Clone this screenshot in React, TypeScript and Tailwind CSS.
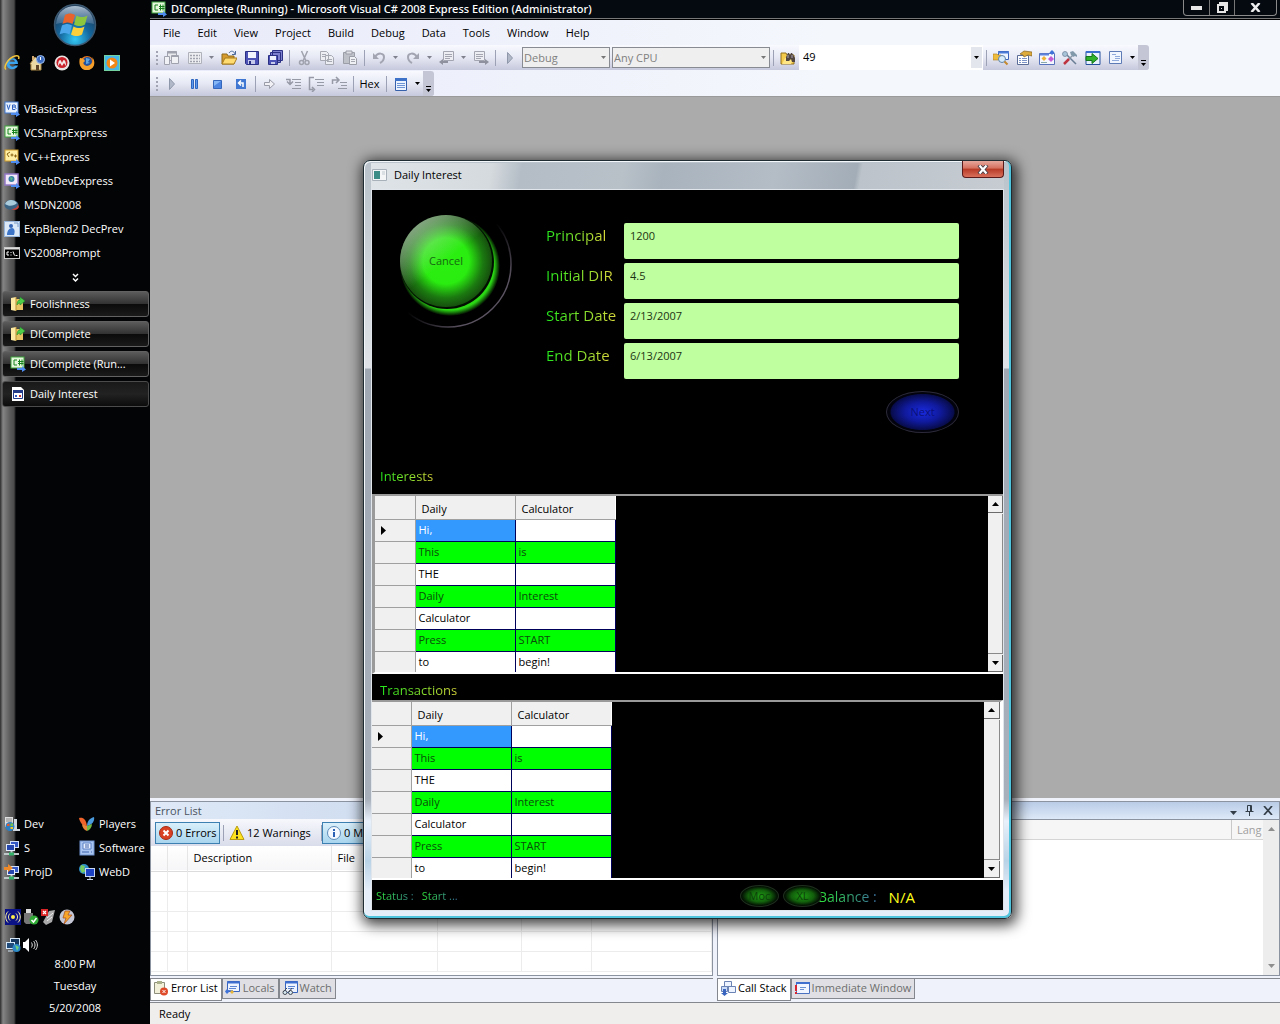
import React from "react";

type Kids = { children?: React.ReactNode };

function Svg({ children, size = 16 }: Kids & { size?: number }) {
  return (
    <svg width={size} height={size} viewBox="0 0 16 16" className="shrink-0" aria-hidden="true">
      {children}
    </svg>
  );
}

/* ---------- Icons ---------- */

const shortcutArrow = <path d="M7 12h5v-2l4 3.500-4 2.500v-2H7z" fill="#4f8cf0" />;

const icons = {
  ie: (
    <Svg>
      <path d="M14 9H5.500c.5 3 4 3.500 5.500 1.500h3C12 16 3 15.500 2.500 9 2 2 14 1 14 9zM5.600 6.800h5.200c-.5-3-4.500-3-5.200 0z" fill="#3ba4ec" />
      <path d="M2 14.500C-1 12 4 3 11 1c3.500-.8 4.500.5 3.500 3" fill="none" stroke="#f3c63c" strokeWidth="1.500" />
    </Svg>
  ),
  house: (
    <Svg>
      <path d="M1 9l5-7 6 6v7H2V9z" fill="#ead9a4" stroke="#a98846" />
      <path d="M3 1h2v4H3z" fill="#d2a970" />
      <path d="M7 10h3v5H7z" fill="#5b4428" />
      <circle cx="11.500" cy="4.500" r="4" fill="#3d6cc0" stroke="#9dbbe8" />
      <path d="M11 2h1v3h-1z" fill="#fff" />
    </Svg>
  ),
  red: (
    <Svg>
      <circle cx="8" cy="8" r="7.500" fill="#e9e4e4" />
      <circle cx="8" cy="7.500" r="5.500" fill="#c9202a" />
      <path d="M4 11c0-4 1-6 2-6s1.500 2 2 3c.5-1 1-3 2-3s2 2 2 6l-2-3-2 3-2-3z" fill="#f4e8e8" />
    </Svg>
  ),
  fox: (
    <Svg>
      <circle cx="8" cy="8" r="7" fill="#e8761b" />
      <circle cx="8.500" cy="6.500" r="4.500" fill="#24529c" />
      <path d="M7 3l4 1-2 3 2 1-4 1z" fill="#5da5de" />
      <path d="M1 3c2 0 4 1 5 3L4 8c1 4 6 4 9 0 2-3 0-6 0-6 4 4 3 12-4 13S-1 9 1 3z" fill="#f5a02b" />
    </Svg>
  ),
  wmp: (
    <Svg>
      <rect x=".5" y=".5" width="15" height="15" fill="#43b7e8" stroke="#74d2a0" />
      <circle cx="8" cy="8" r="5.500" fill="#f18718" />
      <path d="M6 4.500l5 3.500-5 3.500z" fill="#fff" />
    </Svg>
  ),
  vb: (
    <Svg>
      <rect x="1" y="1" width="13" height="11" fill="#e9f3ff" stroke="#3f79d0" />
      <path d="M3 3.500l1.500 5L6 3.500M8.500 4v4.500H11l1-1-1-1.500.5-1-.5-1H8.500M8 6h3" fill="none" stroke="#2a5fc0" />
      {shortcutArrow}
    </Svg>
  ),
  cs: (
    <Svg>
      <rect x="1" y="1" width="13" height="11" fill="#e5f8dc" stroke="#3fa33f" />
      <path d="M7 4H4v5h3M9.500 3.500v6M12 3.500v6M8 5.500h5.500M8 7.500h5.500" fill="none" stroke="#17831f" />
      {shortcutArrow}
    </Svg>
  ),
  vc: (
    <Svg>
      <rect x="1" y="1" width="13" height="11" fill="#fff0a6" stroke="#cf9d2a" />
      <path d="M6 3L3 5l2 3M6.500 6h3M8 4.500v3M10 7h3M11.500 5.500v3" fill="none" stroke="#8a6414" />
      {shortcutArrow}
    </Svg>
  ),
  web: (
    <Svg>
      <rect x="1" y="1" width="13" height="11" fill="#f2eafa" stroke="#9378c6" strokeWidth="1.500" />
      <circle cx="7.500" cy="6" r="3" fill="#377fa6" />
      <path d="M6 4l3 1-2 3z" fill="#5eb784" />
      {shortcutArrow}
    </Svg>
  ),
  msdn: (
    <Svg>
      <ellipse cx="7.500" cy="8" rx="7" ry="5" fill="#3b6384" />
      <path d="M1 7c2-5 9-5 12-1-3 3-8 4-12 1z" fill="#a9cbdc" />
      <path d="M7 12c4 0 7-2 7-5l1 3c-1 3-5 4-8 2z" fill="#c3413a" />
    </Svg>
  ),
  blend: (
    <Svg>
      <rect x=".5" y=".5" width="15" height="15" fill="#dbe8f8" stroke="#98b4d8" />
      <circle cx="7" cy="5" r="2" fill="#3565b5" />
      <path d="M3 14c0-4 2-7 5-7s3 4 2 7z" fill="#3c74c8" />
      <path d="M10 2h4v4" fill="none" stroke="#7799c9" />
    </Svg>
  ),
  prompt: (
    <Svg>
      <rect x=".5" y="2.500" width="15" height="11" fill="#000" stroke="#c8c8c8" />
      <path d="M1 3h14v1.500H1z" fill="#ddd" />
      <path d="M5 7H3v3h2M7 7v1M7 9.500v1M9 6.500l1.500 4M11.500 10.500h2" fill="none" stroke="#fff" />
    </Svg>
  ),
  folder: (
    <Svg>
      <path d="M1 2l5-1v14l-5-1z" fill="#fbe9a4" />
      <path d="M6 3h7v11H6z" fill="#e6c464" />
      <path d="M6 1v14" stroke="#b98f30" />
      <path d="M7 9c0-3 1-5 3-5V1l5 4-5 4V7C8 7 8 8 7 9z" fill="#4fd04a" stroke="#1c8a2a" strokeWidth=".6" />
    </Svg>
  ),
  form: (
    <Svg>
      <path d="M2 1h9l3 3v11H2z" fill="#fff" />
      <path d="M3.500 5.500h9v7h-9z" fill="#fff" stroke="#223a88" />
      <path d="M3 4h10v3H3z" fill="#223a88" />
      <path d="M5 9h2v2H5z" fill="#2e59c8" />
      <path d="M9 9h2v2H9z" fill="#c53535" />
    </Svg>
  ),
  dev: (
    <Svg>
      <path d="M1 1h8v10H1z" fill="#dedede" />
      <path d="M2 3h6M2 5h6" stroke="#888" />
      <path d="M10 3h3v10h-3zM9 13h7v2H9z" fill="#cfd6dd" />
      <circle cx="6" cy="10.500" r="4.500" fill="#2d7fc4" />
      <path d="M3 8l2.500-.5V10H3z" fill="#e85b28" />
      <path d="M6.500 7.500H9V10H6.500z" fill="#7cc243" />
      <path d="M6.500 11H9v2H6.500z" fill="#f6c52b" />
    </Svg>
  ),
  net: (
    <Svg>
      <rect x="6.500" y="1.500" width="8" height="6" fill="#3559c4" stroke="#d3e0f5" />
      <rect x="2.500" y="4.500" width="8" height="6" fill="#2547ae" stroke="#e1ebfa" />
      <path d="M0 14h15M7.500 11v3" stroke="#bfc8c8" strokeWidth="2" />
      <path d="M5 14h5" stroke="#32b268" strokeWidth="3" />
    </Svg>
  ),
  proj: (
    <Svg>
      <rect x="6.500" y="2.500" width="8" height="6" fill="#3559c4" stroke="#d3e0f5" />
      <rect x="3.500" y="5.500" width="7" height="5" fill="#2547ae" stroke="#e1ebfa" />
      <path d="M0 3h4V0l5 4-5 4V6H0z" fill="#ef8a2a" />
      <path d="M0 14h15M7.500 11v3" stroke="#bfc8c8" strokeWidth="2" />
      <path d="M5 14h5" stroke="#32b268" strokeWidth="3" />
    </Svg>
  ),
  players: (
    <Svg>
      <path d="M0 2c4-1 7 1 8 8-4 0-7-3-8-8z" fill="#f0632a" />
      <path d="M8 10c0-5 3-8 7-9 1 4-2 8-7 9z" fill="#4a9ade" />
      <path d="M3 8l5 2v5c-3-1-5-4-5-7z" fill="#e9853a" />
      <path d="M8 10l5-2c0 3-2 6-5 7z" fill="#72b844" />
    </Svg>
  ),
  software: (
    <Svg>
      <rect x="1" y="1" width="14" height="14" fill="#a9c5f0" stroke="#7192cf" />
      <path d="M4 3h8v6H4z" fill="#e7f0ff" stroke="#5a7fc5" />
      <path d="M3 12h7M6 5h4M6 7h4M12 12h1" stroke="#3f62ab" />
    </Svg>
  ),
  webd: (
    <Svg>
      <circle cx="5" cy="5" r="5" fill="#2f8fc6" />
      <path d="M2 1l4 1-1 3 2 2-4 2-2-4z" fill="#76cc63" />
      <rect x="6.500" y="4.500" width="9" height="8" fill="#1d43c4" stroke="#c8d7f0" />
      <path d="M11 13v2M8 15.500h6" stroke="#c8d7f0" />
    </Svg>
  ),
  radio: (
    <Svg>
      <path d="M0 0h16v16H0z" fill="#0b1285" />
      <circle cx="8" cy="8" r="2" fill="#ffef4a" />
      <path d="M5 4.500c-2 2-2 5 0 7M11 4.500c2 2 2 5 0 7M3 2.500c-3 3-3 8 0 11M13 2.500c3 3 3 8 0 11" fill="none" stroke="#fff6a0" />
    </Svg>
  ),
  usb: (
    <Svg>
      <path d="M3 0h5v4H3z" fill="#ddd" />
      <path d="M1 4h9v8l-3 3H3l-2-2z" fill="#777" />
      <circle cx="11" cy="11" r="4.500" fill="#30ab35" />
      <path d="M8.500 11l2 2 3-4" fill="none" stroke="#fff" strokeWidth="1.500" />
    </Svg>
  ),
  card: (
    <Svg>
      <path d="M8 2l6-1-3 12-6 3-3-3z" fill="#aaa" />
      <path d="M6 9l6-5M6 12l5-4" stroke="#eee" />
      <rect width="7" height="7" fill="#d92525" />
      <path d="M2 2l3 3M5 2L2 5" stroke="#fff" strokeWidth="1.200" />
    </Svg>
  ),
  bolt: (
    <Svg>
      <circle cx="8" cy="8" r="7.500" fill="#c5c7d4" />
      <path d="M6 2h5l-2 4h4L5 15l2-6H4z" fill="#f6a52a" stroke="#a54a1a" strokeWidth=".7" />
    </Svg>
  ),
  lan: (
    <Svg>
      <rect x="5.500" y="1.500" width="9" height="8" fill="#16375e" stroke="#d6e8f7" />
      <rect x="1.500" y="5.500" width="8" height="6" fill="#1f4a7a" stroke="#d6e8f7" />
      <path d="M3 14h5" stroke="#d6e8f7" />
      <circle cx="11.500" cy="11" r="4" fill="#2c87c8" />
      <path d="M10 8l4 2-2 4-1-3z" fill="#6fd07b" />
    </Svg>
  ),
  speaker: (
    <Svg>
      <path d="M0 5h2l4-4v14l-4-4H0z" fill="#fff" />
      <path d="M8.500 5.500c1 2 1 3 0 5M10.500 4c2 2 2 6 0 8M12.500 3c2.500 3 2.500 7 0 10" fill="none" stroke="#ddd" />
    </Svg>
  ),
  newProject: (
    <Svg>
      <path d="M3.500 1.500h9v9h-9z" fill="#e8e9ed" stroke="#a0a3ad" />
      <path d="M3 2.500h10" stroke="#a0a3ad" strokeWidth="2" />
      <path d="M.5 6.500h5v8h-5zM7.500 5.500h7v8h-7z" fill="#f0f1f5" stroke="#a0a3ad" />
      <path d="M8 6.500h6" stroke="#a0a3ad" />
    </Svg>
  ),
  addItem: (
    <Svg>
      <path d="M1.500 2.500h13v11h-13z" fill="#eceef2" stroke="#b0b2bb" />
      <path d="M3 5.500h10M3 8.500h10M3 11.500h10" stroke="#a0a3ad" strokeWidth="1.500" strokeDasharray="2 1" />
    </Svg>
  ),
  open: (
    <Svg>
      <path d="M1 4h5l1 2h6v8H1z" fill="#d79b2d" stroke="#8d6b1b" />
      <path d="M1 14l3-6h12l-3 6z" fill="#ffdb70" stroke="#a77b1c" />
      <path d="M8 3c2-3 5-2 6 1M14.500 1v3.500H11" fill="none" stroke="#4b6a9b" />
    </Svg>
  ),
  save: (
    <Svg>
      <path d="M1.500 1.500h13v13h-12l-1-1z" fill="#4d52b6" stroke="#2c3085" />
      <path d="M4 2h8v6H4z" fill="#f2f5ff" />
      <path d="M4 10h7v4H4z" fill="#c7cbeb" />
      <path d="M5 11h2v3H5z" fill="#2c3085" />
    </Svg>
  ),
  saveAll: (
    <Svg>
      <path d="M5.500.5h10v10h-10zM3.500 2.500h10v10h-10z" fill="#7c80cf" stroke="#2c3085" />
      <path d="M1.500 5.500h9v9h-9z" fill="#4d52b6" stroke="#2c3085" />
      <path d="M3 6h6v4H3z" fill="#eef1ff" />
      <path d="M4 12h4v2H4z" fill="#c7cbeb" />
    </Svg>
  ),
  cut: (
    <Svg>
      <path d="M5.500 1L10 11M11.500 1L7 11" stroke="#a0a3ad" strokeWidth="1.500" />
      <circle cx="5.500" cy="12.500" r="2" fill="none" stroke="#a0a3ad" strokeWidth="1.500" />
      <circle cx="11" cy="12.500" r="2" fill="none" stroke="#a0a3ad" strokeWidth="1.500" />
    </Svg>
  ),
  copy: (
    <Svg>
      <path d="M1.500 1.500h6l2 2v7h-8zM6.500 5.500h6l2 2v7h-8z" fill="#eceef3" stroke="#a6a8b2" />
      <path d="M3 4.500h4M3 6.500h3M8 9.500h5M8 11.500h5" stroke="#a6a8b2" />
    </Svg>
  ),
  paste: (
    <Svg>
      <path d="M1.500 2.500h11v11h-11z" fill="#bfc1c9" stroke="#9b9da7" />
      <path d="M4 1h6v3H4z" fill="#dfe0e5" stroke="#9b9da7" />
      <path d="M7.500 6.500h5l2 2v6h-7z" fill="#f0f1f5" stroke="#9b9da7" />
      <path d="M9 9.500h4M9 11.500h4" stroke="#a6a8b2" />
    </Svg>
  ),
  undo: (
    <Svg>
      <path d="M4 7c3-5 9-4 9 0 0 3-2 5-4 6" fill="none" stroke="#a3a6b2" strokeWidth="2" />
      <path d="M2 3v6h6z" fill="#a3a6b2" />
    </Svg>
  ),
  redo: (
    <Svg>
      <path d="M12 7c-3-5-9-4-9 0 0 3 2 5 4 6" fill="none" stroke="#a3a6b2" strokeWidth="2" />
      <path d="M14 3v6H8z" fill="#a3a6b2" />
    </Svg>
  ),
  navBack: (
    <Svg>
      <path d="M4.500 1.500h10v9h-10z" fill="#eceef3" stroke="#a3a6b0" />
      <path d="M6 4.500h7M6 6.500h7M6 8.500h5" stroke="#a3a6b0" />
      <path d="M0 12l4-3v2h5v2H4v2z" fill="#8f929e" />
    </Svg>
  ),
  navForward: (
    <Svg>
      <path d="M1.500 1.500h10v9h-10z" fill="#eceef3" stroke="#a3a6b0" />
      <path d="M3 4.500h7M3 6.500h7M3 8.500h5" stroke="#a3a6b0" />
      <path d="M16 12l-4-3v2H6v2h6v2z" fill="#8f929e" />
    </Svg>
  ),
  play: (
    <Svg>
      <path d="M5.500 2.500l5 5.500-5 5.500z" fill="#b1b9c8" stroke="#8f98ab" />
    </Svg>
  ),
  findInFiles: (
    <Svg>
      <path d="M1 3h5l1 2h7v9H1z" fill="#f3ca4c" stroke="#92701f" />
      <path d="M2 14l3-6h9l-3 6z" fill="#ffe583" />
      <path d="M6 7l2-4h1l1 2 1-2h1l3 5v4h-3l-1-3-2 2H6z" fill="#51463f" />
      <path d="M8 5v3M12 5v3" stroke="#aba3b8" />
    </Svg>
  ),
  solution: (
    <Svg>
      <path d="M5.500 1.500h10v8h-10z" fill="#eff5ff" stroke="#3962b8" />
      <path d="M5 2.500h11" stroke="#4b7bd7" strokeWidth="2" />
      <path d="M0 4h4l1 1h3v5H0z" fill="#efbd3e" stroke="#a77b1c" strokeWidth=".6" />
      <circle cx="9" cy="9" r="3.500" fill="#d6ecfa" stroke="#6083a8" />
      <path d="M11.500 11.500l3 3" stroke="#c58a2d" strokeWidth="2" />
    </Svg>
  ),
  properties: (
    <Svg>
      <path d="M1.500 5.500h11v9h-11z" fill="#fff" stroke="#5b6d96" />
      <path d="M3 8.500h2M6 8.500h5M3 10.500h2M6 10.500h5M3 12.500h2M6 12.500h5" stroke="#7b93c6" />
      <path d="M4 4l4-3 8 1v4l-4-1-4 2-1-2z" fill="#dcab3b" stroke="#846223" strokeWidth=".7" />
    </Svg>
  ),
  toolbox: (
    <Svg>
      <path d="M.5 3.500h15v11H.5z" fill="#f4f7ff" stroke="#5672bd" />
      <path d="M1 4.500h9" stroke="#5d83da" strokeWidth="2" />
      <path d="M5 6l2.500 2.500L5 11 2.500 8.500z" fill="#f0b339" />
      <path d="M12 6l3 3-3 3-3-3z" fill="#c55cd6" />
      <path d="M13 0l2.500 2.500L13 5l-2.500-2.500z" fill="#3f72d8" />
      <path d="M2 12.500h6" stroke="#8aa" />
    </Svg>
  ),
  tools: (
    <Svg>
      <path d="M3 3l11 11" stroke="#697e94" strokeWidth="1.500" />
      <circle cx="3" cy="4" r="2.500" fill="#a8c4d8" stroke="#697e94" strokeWidth=".7" />
      <path d="M10 6L6 10" stroke="#8a97a4" strokeWidth="1.500" />
      <path d="M7 9l-5 5" stroke="#bd3340" strokeWidth="2.500" />
      <path d="M8 2l3-1 4 4v2l-2-1-2 1-2-2z" fill="#8299ac" />
    </Svg>
  ),
  startPage: (
    <Svg>
      <path d="M1 1.500h14v13H1z" fill="#e8f2ff" stroke="#254f9b" />
      <path d="M1 2h14" stroke="#3a6dce" strokeWidth="2" />
      <path d="M1 6.500h6V3.500l6 5-6 5v-3H1z" fill="#2fb12b" stroke="#14741b" />
    </Svg>
  ),
  listWindow: (
    <Svg>
      <path d="M1.500 1.500h12v12h-12z" fill="#f2f6ff" stroke="#5f7bb5" />
      <path d="M4 4.500h4M7 6.500h5M7 8.500h5M4 10.500h7" stroke="#8faadb" />
    </Svg>
  ),
  pause: (
    <Svg>
      <path d="M4.500 3.500h2v9h-2zM8.500 3.500h2v9h-2z" fill="#5c98ec" stroke="#2d64be" />
    </Svg>
  ),
  stop: (
    <Svg>
      <path d="M3.500 4.500h8v8h-8z" fill="#4c85e1" stroke="#3467bb" />
      <path d="M4 5h7l-7 5z" fill="#84b6f6" />
    </Svg>
  ),
  restart: (
    <Svg>
      <path d="M3 3h10v10H3z" fill="#3f77d2" />
      <path d="M10 11V7H6M8 4.500L5.500 7 8 9.500" fill="none" stroke="#fff" strokeWidth="1.500" />
    </Svg>
  ),
  nextStatement: (
    <Svg>
      <path d="M2.500 6.500h5v-3l5 4.500-5 4.500v-3h-5z" fill="#f1f1f5" stroke="#999ca7" />
    </Svg>
  ),
  stepInto: (
    <Svg>
      <path d="M7 3.500h9M10 6.500h6M10 9.500h6M7 12.500h9" stroke="#9699a6" />
      <path d="M1 3.500h4v4M2 5.500l3 3 3-3" fill="none" stroke="#9699a6" strokeWidth="1.500" />
    </Svg>
  ),
  stepOver: (
    <Svg>
      <path d="M7 3.500h9M9 6.500h7M9 9.500h7" stroke="#9699a6" />
      <path d="M6 1.500H1.500v12H5M4 11l2.500 2.500L4 16" fill="none" stroke="#9699a6" strokeWidth="1.500" />
    </Svg>
  ),
  stepOut: (
    <Svg>
      <path d="M9 6.500h7M10 9.500h6M7 12.500h9" stroke="#9699a6" />
      <path d="M1.500 8V4H7M5 1l3 3-3 3" fill="none" stroke="#9699a6" strokeWidth="1.500" />
    </Svg>
  ),
  output: (
    <Svg>
      <path d="M2.500 2.500h11v12h-11z" fill="#eaf3ff" stroke="#3661aa" />
      <path d="M2 3.500h12" stroke="#3e72c9" strokeWidth="3" />
      <path d="M4 7.500h8M4 9.500h8M4 11.500h8" stroke="#6c94d4" />
    </Svg>
  ),
  error: (
    <Svg>
      <circle cx="8" cy="8" r="6.500" fill="#d84124" stroke="#a72a14" />
      <path d="M5.500 5.500l5 5M10.500 5.500l-5 5" stroke="#fff" strokeWidth="2" />
    </Svg>
  ),
  warning: (
    <Svg>
      <path d="M8 1l7 13.500H1z" fill="#ffe31c" stroke="#b89b10" strokeLinejoin="round" />
      <path d="M8 5v5M8 11.500v2" stroke="#222" strokeWidth="2" />
    </Svg>
  ),
  info: (
    <Svg>
      <circle cx="8" cy="8" r="6.500" fill="#f3f9ff" stroke="#5d8bb8" />
      <path d="M8 4v2M8 7v5" stroke="#2b61b4" strokeWidth="2" />
    </Svg>
  ),
  errorTab: (
    <Svg>
      <path d="M1.500 2.500h10v11h-10z" fill="#f3f0da" stroke="#8d8d7c" />
      <path d="M4 1h5v3H4z" fill="#aab08a" />
      <circle cx="11" cy="11.500" r="4" fill="#df4b2a" />
      <path d="M9.500 10l3 3M12.500 10l-3 3" stroke="#fff" />
    </Svg>
  ),
  locals: (
    <Svg>
      <path d="M2.500 1.500h12v10h-12z" fill="#eef4ff" stroke="#3863bc" />
      <path d="M2 2.500h13" stroke="#3c6fd0" strokeWidth="2" />
      <path d="M5 6.500h7M4 8.500h7M3 10.500h5" stroke="#5c86d4" />
      <path d="M7 10l2 2-2 2-2-2z" fill="#e8b637" />
      <path d="M2 9l2.500 2.500L2 14l-2-2.500z" fill="#3f72d8" />
    </Svg>
  ),
  watch: (
    <Svg>
      <path d="M3.500 1.500h12v11h-12z" fill="#eef4ff" stroke="#3863bc" />
      <path d="M3 2.500h13" stroke="#3c6fd0" strokeWidth="2" />
      <path d="M6 6.500h7M6 8.500h6" stroke="#5c86d4" />
      <circle cx="3" cy="12.500" r="2" fill="#d8e8f0" stroke="#454b57" />
      <circle cx="8.500" cy="12.500" r="2" fill="#d8e8f0" stroke="#454b57" />
      <path d="M1 12l4-4M7 12l3-4" stroke="#454b57" />
    </Svg>
  ),
  callStack: (
    <Svg>
      <path d="M4.500 1.500h7v5h-7zM8.500 6.500h7v6h-7z" fill="#eef4ff" stroke="#6b82b4" />
      <path d="M1.500 6.500h6v5h-6z" fill="#cbdcf8" stroke="#6b82b4" />
      <path d="M3 9v4H1l3.500 3L8 13H6V9z" fill="#3a66c0" />
    </Svg>
  ),
  immediate: (
    <Svg>
      <path d="M2.500 2.500h13v11h-13z" fill="#f0f5ff" stroke="#4a71bf" />
      <path d="M2 3h14" stroke="#3f6fce" strokeWidth="2" />
      <path d="M6 7.500h6M6 9.500h4" stroke="#6c94d4" />
      <path d="M1 5h2v6H1zM1 12h2v2H1z" fill="#d72630" />
    </Svg>
  ),
  app: (
    <Svg>
      <path d="M.5 2.500h14v11H.5z" fill="#f3f5f6" stroke="#a8b1b9" />
      <path d="M2 4h6v8H2z" fill="#3c8d88" />
      <path d="M10 4h3v4h-3z" fill="#d9dfe2" />
    </Svg>
  ),
};

type IconName = keyof typeof icons;

function Triangle({ up = false, className = "text-black" }: { up?: boolean; className?: string }) {
  return (
    <svg width="7" height="4" viewBox="0 0 7 4" className={className} aria-hidden="true">
      <path d={up ? "M0 4h7L3.500 0z" : "M0 0h7L3.500 4z"} fill="currentColor" />
    </svg>
  );
}

function StartOrb() {
  return (
    <svg width="44" height="44" viewBox="0 0 44 44" aria-hidden="true">
      <defs>
        <radialGradient id="orb" cx="50%" cy="85%" r="75%">
          <stop offset="0" stopColor="#35c8f4" />
          <stop offset=".5" stopColor="#14689f" />
          <stop offset="1" stopColor="#1d3a58" />
        </radialGradient>
        <linearGradient id="gloss" x1="0" y1="0" x2="0" y2="1">
          <stop offset="0" stopColor="#c6d8e8" stopOpacity=".85" />
          <stop offset="1" stopColor="#7795b5" stopOpacity=".4" />
        </linearGradient>
      </defs>
      <circle cx="22" cy="22" r="20.500" fill="url(#orb)" stroke="#3c5870" strokeWidth="1.500" />
      <path d="M3 21C4 8 13 3 22 3s18 5 19 18c-12-3-26-3-38 0z" fill="url(#gloss)" />
      <path d="M12 12c4-2 6-2 10 0l-2.500 9c-3-2-6-2-10 0z" fill="#e9632b" />
      <path d="M23.500 12.500c4 2 7 2 11 0l-2.500 9c-4 2-7 2-11 0z" fill="#8cc63e" />
      <path d="M9 22.500c4-2 7-2 10 0l-2.500 9c-3-2-6-2-10 0z" fill="#4ba7ea" />
      <path d="M20.500 23.500c4 2 7 2 11 0l-2.500 8c-4 2-7 2-11 0z" fill="#fbd03c" />
    </svg>
  );
}

/* ---------- Sidebar ---------- */

const launchers: [IconName, string][] = [
  ["vb", "VBasicExpress"],
  ["cs", "VCSharpExpress"],
  ["vc", "VC++Express"],
  ["web", "VWebDevExpress"],
  ["msdn", "MSDN2008"],
  ["blend", "ExpBlend2 DecPrev"],
  ["prompt", "VS2008Prompt"],
];
const tasks: [IconName, string][] = [
  ["folder", "Foolishness"],
  ["folder", "DIComplete"],
  ["cs", "DIComplete (Run..."],
  ["form", "Daily Interest"],
];
const shortcuts: [IconName, string][] = [
  ["dev", "Dev"],
  ["players", "Players"],
  ["net", "S"],
  ["software", "Software"],
  ["proj", "ProjD"],
  ["webd", "WebD"],
];

function Sidebar() {
  return (
    <aside className="flex w-[150px] shrink-0 flex-col bg-[linear-gradient(90deg,#2c2c2c_0,#858585_3px,#5b5b5b_10px,#4b4b4b_14px,#030406_16px)] text-white">
      <button aria-label="Start" className="mt-[3px] self-center">
        <StartOrb />
      </button>
      <nav className="mt-2 flex gap-[9px] pl-1" aria-label="Quick launch">
        {(["ie", "house", "red", "fox", "wmp"] as IconName[]).map((n) => (
          <button key={n} aria-label={n}>{icons[n]}</button>
        ))}
      </nav>
      <ul className="mt-[26px] pl-1">
        {launchers.map(([icon, label]) => (
          <li key={label}>
            <button className="flex h-6 items-center gap-1 whitespace-nowrap">
              {icons[icon]}
              {label}
            </button>
          </li>
        ))}
      </ul>
      <button aria-label="More" className="mt-2 self-center">
        <svg width="7" height="10" viewBox="0 0 7 10" fill="none" stroke="#fff" strokeWidth="1.500" aria-hidden="true">
          <path d="M1 1l2.500 2.500L6 1M1 5.500L3.500 8 6 5.500" />
        </svg>
      </button>
      <div className="mt-2 flex flex-col gap-1 pl-0.5 pr-px">
        {tasks.map(([icon, label], i) => (
          <button
            key={label}
            className={
              "flex h-[26px] items-center gap-1 whitespace-nowrap rounded-[3px] border px-[7px] " +
              (i === 3
                ? "border-[#4b4b4b] bg-[linear-gradient(#191919,#222_50%,#0c0c0c)]"
                : "border-[#626262] bg-[linear-gradient(#5b5b5b,#333_48%,#0b0b0b_52%,#1a1a1a)]")
            }
          >
            {icons[icon]}
            {label}
          </button>
        ))}
      </div>
      <div className="mt-auto grid grid-cols-[75px_1fr] pl-1">
        {shortcuts.map(([icon, label]) => (
          <button key={label} className="flex h-6 items-center gap-1 whitespace-nowrap">
            {icons[icon]}
            {label}
          </button>
        ))}
      </div>
      <div className="mt-[25px] flex gap-0.5 pl-[5px]">
        {icons.radio}
        {icons.usb}
        {icons.card}
        {icons.bolt}
      </div>
      <div className="mt-3 flex gap-0.5 pl-[5px]">
        {icons.lan}
        {icons.speaker}
      </div>
      <div className="mb-[5px] flex flex-col items-center leading-[22px]">
        <span>8:00 PM</span>
        <span>Tuesday</span>
        <span>5/20/2008</span>
      </div>
    </aside>
  );
}

/* ---------- IDE toolbars ---------- */

function Tool({ name }: { name: IconName }) {
  return (
    <button aria-label={name} className="flex w-[23px] shrink-0 items-center justify-center">
      {icons[name]}
    </button>
  );
}
function Caret({ dim = false }: { dim?: boolean }) {
  return (
    <button aria-label="Options" className="flex w-[11px] shrink-0 items-center justify-center">
      <svg width="5" height="3" viewBox="0 0 5 3" aria-hidden="true">
        <path d="M0 0h5L2.500 3z" fill={dim ? "#7f828c" : "#000"} />
      </svg>
    </button>
  );
}
function Sep() {
  return (
    <span className="flex w-[6px] shrink-0 items-center justify-center">
      <span className="h-4 w-px bg-[#9da1b5]" />
    </span>
  );
}
function Grip() {
  return (
    <span className="flex w-[6px] shrink-0 flex-col justify-center gap-0.5 pl-0.5">
      {[0, 1, 2, 3].map((i) => (
        <span key={i} className="size-0.5 bg-[#a2a4b3]" />
      ))}
    </span>
  );
}
function Overflow() {
  return (
    <button aria-label="Toolbar options" className="flex w-[11px] shrink-0 flex-col items-center justify-end gap-0.5 rounded-r-[3px] bg-[#c4c6d6] pb-1">
      <span className="h-px w-[5px] bg-black" />
      <svg width="5" height="3" viewBox="0 0 5 3" aria-hidden="true">
        <path d="M0 0h5L2.500 3z" />
      </svg>
    </button>
  );
}
function Combo({ label, value, className }: { label: string; value: string; className: string }) {
  return (
    <span className={"relative my-0.5 shrink-0 " + className}>
      <select aria-label={label} disabled className="block h-full w-full appearance-none border border-[#888b92] bg-[#efefef] px-px leading-4 text-[#808080] opacity-100">
        <option>{value}</option>
      </select>
      <svg width="5" height="3" viewBox="0 0 5 3" className="absolute right-1 top-[9px]" aria-hidden="true">
        <path d="M0 0h5L2.500 3z" fill="#777" />
      </svg>
    </span>
  );
}

const strip = "flex w-max rounded-r-[3px] bg-[linear-gradient(#f9faff,#e6e8f4_50%,#c6c9dc)] pl-1";

function Toolbars() {
  return (
    <div className="flex flex-col gap-px">
      <div className={strip + " h-[25px]"}>
        <Grip />
        <Tool name="newProject" />
        <Tool name="addItem" />
        <Caret dim />
        <Tool name="open" />
        <Tool name="save" />
        <Tool name="saveAll" />
        <Sep />
        <Tool name="cut" />
        <Tool name="copy" />
        <Tool name="paste" />
        <Sep />
        <Tool name="undo" />
        <Caret dim />
        <Tool name="redo" />
        <Caret dim />
        <Tool name="navBack" />
        <Caret dim />
        <Tool name="navForward" />
        <Sep />
        <Tool name="play" />
        <Combo label="Solution configuration" value="Debug" className="ml-px w-[88px]" />
        <Combo label="Solution platform" value="Any CPU" className="ml-0.5 w-[158px]" />
        <Sep />
        <Tool name="findInFiles" />
        <span className="flex w-[184px] bg-white">
          <input aria-label="Find" defaultValue="49" className="min-w-0 flex-1 bg-transparent px-1 pb-0.5 outline-none" />
          <span className="my-0.5 mr-px flex bg-[#e4e6ee]">
            <Caret />
          </span>
        </span>
        <Sep />
        <Tool name="solution" />
        <Tool name="properties" />
        <Tool name="toolbox" />
        <Tool name="tools" />
        <Tool name="startPage" />
        <Tool name="listWindow" />
        <Caret />
        <Overflow />
      </div>
      <div className={strip + " h-[25px]"}>
        <Grip />
        <Tool name="play" />
        <Tool name="pause" />
        <Tool name="stop" />
        <Tool name="restart" />
        <Sep />
        <Tool name="nextStatement" />
        <Tool name="stepInto" />
        <Tool name="stepOver" />
        <Tool name="stepOut" />
        <Sep />
        <button className="w-[27px] text-center">Hex</button>
        <Sep />
        <Tool name="output" />
        <Caret />
        <Overflow />
      </div>
    </div>
  );
}

const menus = ["File", "Edit", "View", "Project", "Build", "Debug", "Data", "Tools", "Window", "Help"];

function IdeHeader() {
  return (
    <header>
      <div className="flex h-[19px] justify-between border-b border-[#777] bg-[#050a11] pl-px text-white">
        <h1 className="flex items-center gap-1 font-['Noto_Sans','Open_Sans',sans-serif] font-medium">
          {icons.cs}
          DIComplete (Running) - Microsoft Visual C# 2008 Express Edition (Administrator)
        </h1>
        <div className="mr-[3px] flex h-4 divide-x divide-[#777] rounded-b-[4px] border border-t-0 border-[#8a8a8a]">
          <button aria-label="Minimize" className="flex w-[26px] items-center justify-center">
            <span className="h-[4px] w-[11px] bg-[#e6e6e6]" />
          </button>
          <button aria-label="Restore" className="flex w-[25px] items-start justify-center pt-0.5">
            <svg width="11" height="11" viewBox="0 0 11 11" aria-hidden="true">
              <path d="M2 0h9v9H9V2H2z" fill="#e6e6e6" />
              <path d="M1 3h7v7H1z" fill="none" stroke="#e6e6e6" strokeWidth="2" />
              <path d="M4 6h1v1H4z" fill="#e6e6e6" />
            </svg>
          </button>
          <button aria-label="Close" className="flex w-[41px] items-center justify-center">
            <svg width="11" height="9" viewBox="0 0 11 9" aria-hidden="true">
              <path d="M1.500 0L9.500 9M9.500 0L1.500 9" stroke="#eee" strokeWidth="2.500" />
            </svg>
          </button>
        </div>
      </div>
      <div className="border-b border-[#9a9a9a] border-t border-t-black bg-[linear-gradient(90deg,#e9eafa,#f4f7fc_60%)]">
        <nav className="flex h-[25px] items-center gap-[17px] pl-[13px]">
          {menus.map((m) => (
            <button key={m}>{m}</button>
          ))}
        </nav>
        <Toolbars />
      </div>
    </header>
  );
}

/* ---------- IDE bottom dock ---------- */

function Tab({ icon, label, active = false }: { icon: IconName; label: string; active?: boolean }) {
  return (
    <button
      className={
        "flex items-center gap-0.5 whitespace-nowrap border border-t-0 border-[#84878e] pl-0.5 pr-[3px] " +
        (active ? "h-[22px] bg-white pb-1" : "h-5 bg-[#e0e0e4] pb-0.5 text-[#6d6d6d]")
      }
    >
      {icons[icon]}
      {label}
    </button>
  );
}

function ErrorList() {
  return (
    <section className="flex w-[563px] shrink-0 flex-col">
      <div className="flex h-[175px] flex-col overflow-hidden border border-[#8b93a1] bg-white">
        <h2 className="h-[17px] shrink-0 bg-[linear-gradient(90deg,#dfe9f7,#b9cbe6)] pl-1 leading-[17px] text-[#4a5360]">Error List</h2>
        <div className="flex h-[27px] shrink-0 items-center bg-[linear-gradient(#f7f8fd,#d9dcea)] pl-1">
          <button className="flex h-[22px] w-[65px] items-center gap-0.5 whitespace-nowrap border border-[#3c7fb1] bg-[linear-gradient(#d9effa,#a8d5ee)] pl-0.5">
            {icons.error}0 Errors
          </button>
          <Sep />
          <button className="flex h-[22px] w-[92px] items-center gap-0.5 whitespace-nowrap pl-[3px]">
            {icons.warning}12 Warnings
          </button>
          <Sep />
          <button className="-ml-0.5 flex h-[22px] items-center gap-0.5 whitespace-nowrap border border-[#3c7fb1] bg-[linear-gradient(#d9effa,#a8d5ee)] px-[3px]">
            {icons.info}0 Messages
          </button>
        </div>
        <table className="w-full table-fixed border-collapse text-left">
          <colgroup>
            <col className="w-4" />
            <col className="w-5" />
            <col className="w-36" />
            <col className="w-[106px]" />
            <col className="w-[84px]" />
            <col className="w-[70px]" />
            <col />
          </colgroup>
          <thead>
            <tr className="h-[25px] border-b border-[#dcdcdc] bg-[linear-gradient(#fff,#f6f6f8)]">
              {["", "", "Description", "File", "", "", ""].map((h, i) => (
                <th key={i} className="border-r border-[#e6e6e6] pl-1.5 font-normal">{h}</th>
              ))}
            </tr>
          </thead>
          <tbody>
            {[0, 1, 2, 3, 4].map((r) => (
              <tr key={r} className="h-5 border-b border-[#ececec]">
                {[0, 1, 2, 3, 4, 5, 6].map((c) => (
                  <td key={c} className="border-r border-[#ececec]" />
                ))}
              </tr>
            ))}
          </tbody>
        </table>
      </div>
      <div className="mt-[2px] flex border-t border-[#84878e]">
        <Tab icon="errorTab" label="Error List" active />
        <Tab icon="locals" label="Locals" />
        <Tab icon="watch" label="Watch" />
      </div>
    </section>
  );
}

function CallStack() {
  return (
    <section className="flex min-w-0 flex-1 flex-col" aria-label="Call Stack">
      <div className="flex h-[175px] flex-col border border-[#8b93a1] bg-white">
        <div className="flex h-[18px] shrink-0 items-center justify-end gap-2 border-b border-[#8b93a1] bg-[linear-gradient(#b9cbe6,#dde9f8)] pr-1.5 text-[#333d48]">
          <button aria-label="Window position"><Triangle className="mt-1 text-[#333d48]" /></button>
          <button aria-label="Auto hide">
            <svg width="9" height="11" viewBox="0 0 9 11" fill="none" stroke="currentColor" aria-hidden="true">
              <path d="M2.500 6V.5h4V6M5.500 1v5M.5 6.500h8M4.500 7v4" />
            </svg>
          </button>
          <button aria-label="Close panel" className="ml-px">
            <svg width="10" height="9" viewBox="0 0 10 9" stroke="currentColor" strokeWidth="1.700" aria-hidden="true">
              <path d="M1 0l8 9M9 0L1 9" />
            </svg>
          </button>
        </div>
        <div className="flex flex-1">
          <div className="flex-1">
            <div className="flex h-5 justify-end border-b border-[#d5d5d5] bg-[#f7f6f6] text-[#a0a0a0]">
              <span className="w-8 border-l border-[#c9c9c9] pl-[5px] leading-5">Lang</span>
            </div>
          </div>
          <div className="flex w-4 flex-col items-center justify-between bg-[#ededed] py-[7px]">
            <Triangle up className="text-[#8e8e8e]" />
            <Triangle className="text-[#8e8e8e]" />
          </div>
        </div>
      </div>
      <div className="mt-[2px] flex border-t border-[#84878e]">
        <Tab icon="callStack" label="Call Stack" active />
        <Tab icon="immediate" label="Immediate Window" />
      </div>
    </section>
  );
}

/* ---------- Daily Interest dialog ---------- */

const rows = [
  ["Hi,", ""],
  ["This", "is"],
  ["THE", ""],
  ["Daily", "Interest"],
  ["Calculator", ""],
  ["Press", "START"],
  ["to", "begin!"],
];

function ScrollButton({ up = false }: { up?: boolean }) {
  return (
    <button
      aria-label={up ? "Scroll up" : "Scroll down"}
      className="flex h-[17px] shrink-0 items-center justify-center border-b border-r border-[#6b6b6b] bg-[#f0f0f0]"
    >
      <Triangle up={up} />
    </button>
  );
}

function DataGrid({ label, inset }: { label: string; inset?: boolean }) {
  return (
    <div
      className={
        "flex h-[180px] items-start justify-between overflow-hidden border-b-2 border-t-2 border-b-white border-t-[#9a9a9a] " +
        (inset ? "border-r-[3px] border-r-white" : "border-l-[3px] border-l-[#9a9a9a]")
      }
    >
      <table aria-label={label} className="table-fixed border-collapse bg-white text-left text-black">
        <colgroup>
          <col className={inset ? "w-[39px]" : "w-10"} />
          <col className="w-[100px]" />
          <col className="w-[100px]" />
        </colgroup>
        <thead>
          <tr className="h-[23px] bg-[#f0f0f0]">
            <th className="border-b border-r border-[#a0a0a0]" />
            <th className="border-b border-r border-[#a0a0a0] pl-1.5 pt-[3px] font-normal">Daily</th>
            <th className="border-b border-[#a0a0a0] pl-1.5 pt-[3px] font-normal">Calculator</th>
          </tr>
        </thead>
        <tbody>
          {rows.map(([a, b], i) => (
            <tr key={i} className={"h-[22px] " + (i % 2 ? "bg-[#00ff00] text-[#0b4a0b]" : "")}>
              <th className="border-b border-r border-[#a0a0a0] bg-[#f0f0f0] pl-1.5">
                {i === 0 && (
                  <svg width="5" height="9" viewBox="0 0 5 9" aria-label="Current row">
                    <path d="M0 0v9l5-4.500z" />
                  </svg>
                )}
              </th>
              <td className={"border-b border-r border-[#00005a] pl-[3px] " + (i === 0 ? "bg-[#3399ff] text-white" : "")}>{a}</td>
              <td className="border-b border-r border-[#00005a] pl-[3px]">{b}</td>
            </tr>
          ))}
        </tbody>
      </table>
      <div className={"flex h-full flex-col bg-[#f0f0f0] " + (inset ? "w-4" : "w-[15px]")}>
        <ScrollButton up />
        <div className="my-px flex-1 border-b border-r border-[#8a8a8a]" />
        <ScrollButton />
      </div>
    </div>
  );
}

const fields = [
  ["principal", "Principal", "1200"],
  ["dir", "Initial DIR", "4.5"],
  ["start", "Start Date", "2/13/2007"],
  ["end", "End Date", "6/13/2007"],
];

const greenYellow = "bg-[linear-gradient(90deg,#22e81c,#d6d63a)] bg-clip-text text-transparent";
const greenBlue = "bg-[linear-gradient(90deg,#2ee53a,#3a6f9e)] bg-clip-text text-transparent";

function CancelButton() {
  return (
    <button type="button" className="relative h-[118px] w-[114px]">
      <svg width="114" height="118" viewBox="0 0 114 118" aria-hidden="true">
        <defs>
          <radialGradient id="ball">
            <stop offset="0" stopColor="#2bf010" />
            <stop offset=".5" stopColor="#2aec10" />
            <stop offset=".8" stopColor="#1b7a10" />
            <stop offset="1" stopColor="#164f0e" />
          </radialGradient>
          <radialGradient id="halo">
            <stop offset=".88" stopColor="#2bd814" />
            <stop offset="1" stopColor="#2bd814" stopOpacity="0" />
          </radialGradient>
          <linearGradient id="shine" x1=".15" y1=".05" x2=".5" y2=".5">
            <stop offset="0" stopColor="#c8d8c8" stopOpacity=".7" />
            <stop offset="1" stopColor="#c8d8c8" stopOpacity="0" />
          </linearGradient>
          <linearGradient id="rim" x1=".3" y1=".3" x2=".8" y2=".8">
            <stop offset=".45" stopColor="#4a4250" stopOpacity="0" />
            <stop offset="1" stopColor="#5a5260" />
          </linearGradient>
        </defs>
        <circle cx="48" cy="50" r="63" fill="none" stroke="url(#rim)" strokeWidth="1.500" />
        <circle cx="50" cy="52" r="50" fill="url(#halo)" />
        <circle cx="47" cy="48" r="47" fill="#021002" />
        <circle cx="46" cy="47" r="46" fill="url(#ball)" />
        <circle cx="46" cy="47" r="46" fill="url(#shine)" />
      </svg>
      <span className="absolute left-0 top-[39px] w-[92px] text-center text-[#14690f]">Cancel</span>
    </button>
  );
}

function Dialog() {
  return (
    <section
      role="dialog"
      aria-label="Daily Interest"
      className="absolute left-[363px] top-[160px] w-[649px] rounded-[7px] border border-[#1f2d33] bg-[linear-gradient(#b9c2ca_0,#c9d0d6_90px,#dfe3e8_207px,#a0a9b3_208px,#a8b1bb_638px,#e8f1fb_660px,#b9d3e6_700px,#e6eefa_730px)] px-[7px] pb-[7px] shadow-[2px_3px_14px_3px_rgba(0,0,0,0.75),inset_-1px_-1px_0_1px_#4fc4dc,inset_1px_1px_0_#f4f8fa]"
    >
      <div className="flex h-7 justify-between bg-[linear-gradient(100deg,#dfe4e8_0,#d5dade_120px,#b4bdc6_150px,#b8c1c8_250px,#a9b3bd_290px,#b4bdc6_400px,#a3adb7_480px,#bcc3ca_485px,#c6ccd2)] bg-clip-content pt-0.5">
        <h2 className="flex items-center gap-1.5 pb-0.5 pl-px text-black">
          {icons.app}
          Daily Interest
        </h2>
        <button aria-label="Close" className="-mt-0.5 flex h-[17px] w-[42px] items-center justify-center rounded-b-[4px] border border-t-0 border-[#5b1a1a] bg-[linear-gradient(#e5a89c,#d5705f_45%,#b73a26_50%,#d8705c)]">
          <svg width="12" height="9" viewBox="0 0 12 9" aria-hidden="true">
            <path d="M2 0l8 9M10 0L2 9" stroke="#4b4048" strokeWidth="4" />
            <path d="M2.500 .5l7 8M9.500 .5l-7 8" stroke="#fff" strokeWidth="2.200" />
          </svg>
        </button>
      </div>
      <div className="border border-[#dfe5ea] bg-black">
        <form className="flex h-[276px] items-start pl-7 pr-11 pt-6">
          <CancelButton />
          <div className="ml-8 mt-[9px] flex flex-1 flex-col gap-1">
            {fields.map(([id, label, value]) => (
              <div key={id} className="flex">
                <label htmlFor={id} className="w-[78px] shrink-0 whitespace-nowrap text-[15px] leading-[24px]">
                  <span className={greenYellow}>{label}</span>
                </label>
                <input id={id} defaultValue={value} className="h-9 min-w-0 flex-1 rounded-[2px] bg-[#bfff9f] pb-[11px] pl-1.5 text-[#1c3313] outline-none" />
              </div>
            ))}
            <button type="button" className="mt-2 h-[42px] w-[73px] self-end rounded-[50%] border border-[#2c2a3a] bg-[radial-gradient(closest-side,#1a2be0,#101a9c_50%,#080c4c_88%,#02030c_92%)] text-[#0a1078]">
              Next
            </button>
          </div>
        </form>
        <h3 className="h-7 pl-2 text-[13px] leading-5">
          <span className={greenYellow}>Interests</span>
        </h3>
        <DataGrid label="Interests" />
        <h3 className="h-[26px] pl-2 text-[13px] leading-[32px]">
          <span className={greenYellow}>Transactions</span>
        </h3>
        <DataGrid label="Transactions" inset />
        <footer className="flex h-[30px] items-center pl-1 pt-0.5">
          <span className={"pr-2 " + greenBlue}>Status :</span>
          <span className={greenBlue}>Start ...</span>
          <div className="ml-auto flex w-[263px] items-center">
            <button className="relative h-[22px] w-[39px] rounded-[50%] border border-[#1f2f1f] bg-[radial-gradient(closest-side,#1f9a14,#12600c_60%,#031203_95%)] text-[#0c400a]">Moc</button>
            <button className="relative ml-1 h-[22px] w-[39px] rounded-[50%] border border-[#1f2f1f] bg-[radial-gradient(closest-side,#1f9a14,#12600c_60%,#031203_95%)] text-[#0c400a]">XL</button>
            <span className={"-ml-1 mt-0.5 whitespace-nowrap text-[14px] " + greenBlue}>Balance :</span>
            <output className="ml-3 mt-0.5 text-[15px] text-[#ffff1a]">N/A</output>
          </div>
        </footer>
      </div>
    </section>
  );
}

export default function App() {
  return (
    <div className="relative flex min-h-screen font-['Open_Sans','Noto_Sans',sans-serif] text-[11px] leading-4 text-black">
      <Sidebar />
      <main className="flex min-w-0 flex-1 flex-col bg-[#ababab]">
        <IdeHeader />
        <div className="flex-1" />
        <div className="flex h-[205px] gap-1 border-b border-[#84878e] bg-[#f0f2fb] pt-[3px]">
          <ErrorList />
          <CallStack />
        </div>
        <footer className="h-[21px] bg-[#f0eded] pl-[9px] leading-[21px]">Ready</footer>
      </main>
      <Dialog />
    </div>
  );
}
